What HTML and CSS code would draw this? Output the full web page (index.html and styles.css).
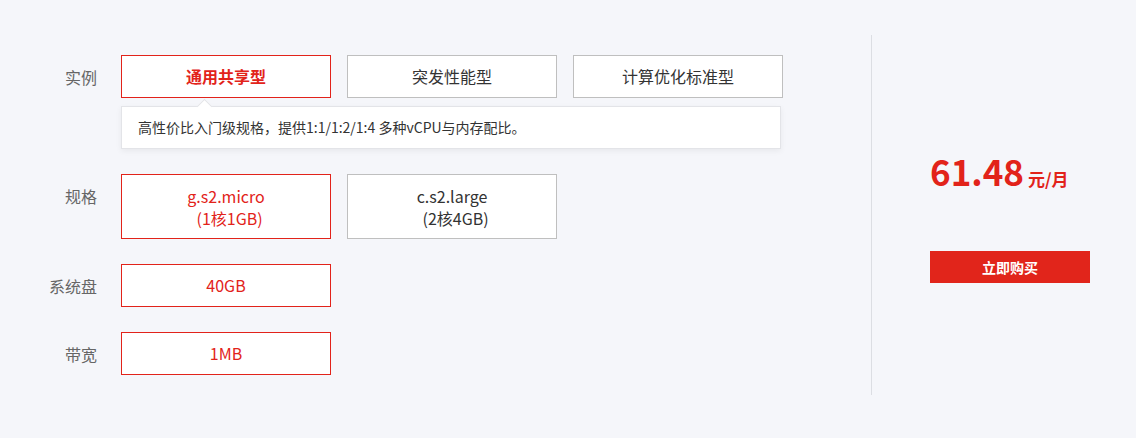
FILE: index.html
```html
<!DOCTYPE html>
<html lang="zh-CN">
<head>
    <meta charset="UTF-8">
    <title>云服务器选购</title>
    <link rel="stylesheet" href="styles.css">
</head>
<body>
    <div class="buy-panel">
        <div class="config">
            <div class="row">
                <div class="label">实例</div>
                <div class="field">
                    <div class="options types">
                        <div class="option active">通用共享型</div>
                        <div class="option">突发性能型</div>
                        <div class="option">计算优化标准型</div>
                    </div>
                    <div class="tip">高性价比入门级规格，提供1:1/1:2/1:4 多种vCPU与内存配比。</div>
                </div>
            </div>

            <div class="row">
                <div class="label">规格</div>
                <div class="field">
                    <div class="options">
                        <div class="option tall active">g.s2.micro<br>&nbsp;&nbsp;(1核1GB)</div>
                        <div class="option tall">c.s2.large<br>&nbsp;&nbsp;(2核4GB)</div>
                    </div>
                </div>
            </div>

            <div class="row">
                <div class="label">系统盘</div>
                <div class="field">
                    <div class="options">
                        <div class="option active">40GB</div>
                    </div>
                </div>
            </div>

            <div class="row">
                <div class="label">带宽</div>
                <div class="field">
                    <div class="options">
                        <div class="option active">1MB</div>
                    </div>
                </div>
            </div>
        </div>

        <div class="summary">
            <div class="price"><span class="amount">61.48</span><span class="unit">元/月</span></div>
            <button class="buy-btn">立即购买</button>
        </div>
    </div>
</body>
</html>
```

FILE: styles.css
```css
/* page */
body {
    margin: 0;
    background-color: #f5f6fa;
    font-family: "Noto Sans CJK SC", sans-serif;
    color: #333;
}

.buy-panel {
    display: flex;
    padding-top: 35px;
}

/* left: configuration rows */
.config {
    width: 871px;
    height: 340px;
    padding-top: 20px;
    border-right: 1px solid #dcdee3;
    display: flex;
    flex-direction: column;
    gap: 25px;
}

.row {
    display: flex;
}

.label {
    width: 97px;
    margin-right: 24px;
    padding-top: 11px;
    line-height: 22px;
    font-size: 16px;
    color: #666;
    text-align: right;
}

.options {
    display: flex;
    gap: 16px;
}

.option {
    box-sizing: border-box;
    width: 210px;
    height: 43px;
    line-height: 41px;
    border: 1px solid #bfbfbf;
    background-color: #fff;
    font-size: 16px;
    text-align: center;
    color: #333;
    cursor: pointer;
}

.option.tall {
    height: 65px;
    padding-top: 10px;
    line-height: 22px;
}

.option.active {
    border-color: #e2231a;
    color: #e2231a;
}

.types .option.active {
    font-weight: bold;
}

/* description under the instance type */
.tip {
    position: relative;
    box-sizing: border-box;
    width: 660px;
    height: 43px;
    margin-top: 8px;
    padding-left: 16px;
    line-height: 41px;
    font-size: 14px;
    color: #333;
    background-color: #fff;
    border: 1px solid #e3e4e8;
    box-shadow: 0 2px 6px rgba(0, 0, 0, 0.06);
}

.tip::before {
    content: "";
    position: absolute;
    top: -6px;
    left: 77px;
    width: 10px;
    height: 10px;
    background-color: #fff;
    border-top: 1px solid #e3e4e8;
    border-left: 1px solid #e3e4e8;
    transform: rotate(45deg);
}

/* right: price and buy button */
.summary {
    padding-top: 111px;
    padding-left: 58px;
}

.price {
    height: 50px;
    line-height: 50px;
    color: #e2231a;
    white-space: nowrap;
}

.amount {
    font-size: 35px;
    font-weight: bold;
}

.unit {
    margin-left: 4px;
    font-size: 17px;
    font-weight: bold;
}

.buy-btn {
    display: block;
    width: 160px;
    height: 32px;
    margin-top: 55px;
    padding: 0;
    border: none;
    background-color: #e1251b;
    color: #fff;
    font-family: inherit;
    font-size: 14px;
    font-weight: bold;
    cursor: pointer;
}
```
